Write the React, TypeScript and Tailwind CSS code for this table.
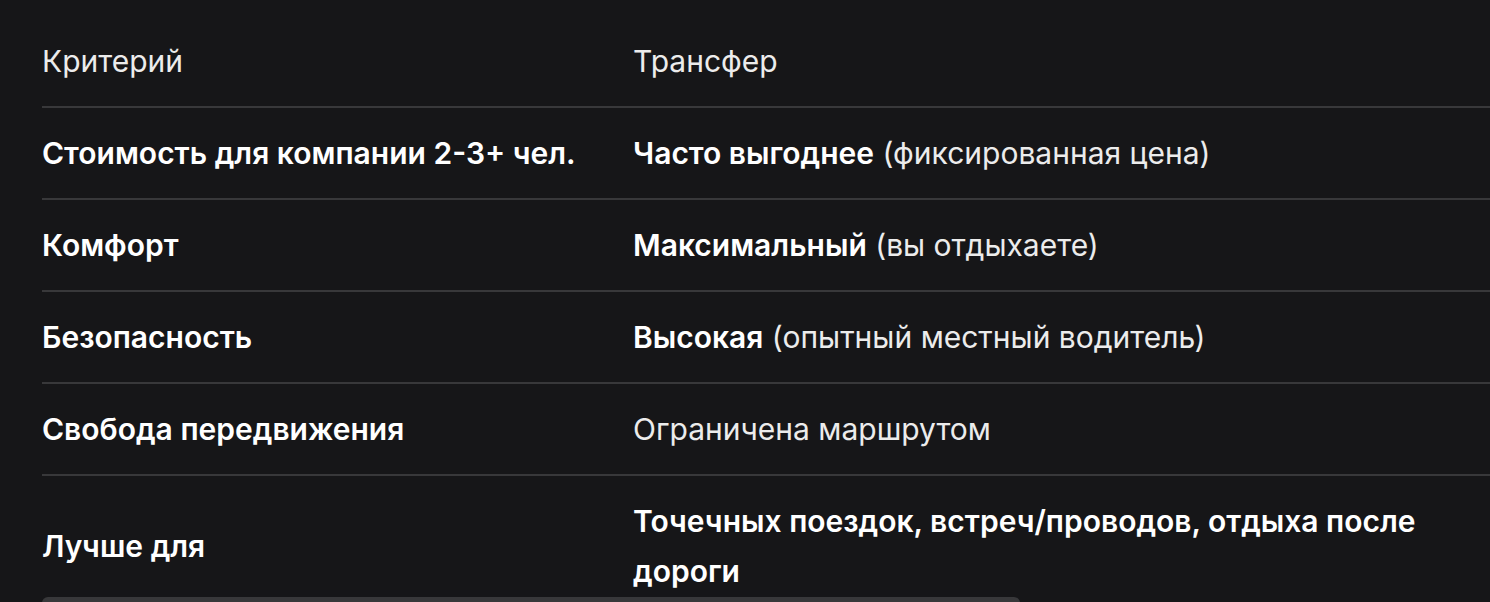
const rows: { label: string; strong?: string; rest?: string }[] = [
	{ label: "Стоимость для компании 2-3+ чел.", strong: "Часто выгоднее", rest: " (фиксированная цена)" },
	{ label: "Комфорт", strong: "Максимальный", rest: " (вы отдыхаете)" },
	{ label: "Безопасность", strong: "Высокая", rest: " (опытный местный водитель)" },
	{ label: "Свобода передвижения", rest: "Ограничена маршрутом" },
	{ label: "Лучше для", strong: "Точечных поездок, встреч/проводов, отдыха после дороги" },
];

export default function App() {
	return (
		<div
			className="relative h-[602px] w-full overflow-hidden bg-[#161618] text-[#ececec]"
			style={{ fontFamily: "Inter, 'Noto Sans', sans-serif" }}
		>
			<div className="ml-[42px] pt-[16px] text-[30px] leading-[50px]">
				{/* Header */}
				<div className="grid grid-cols-[591px_1fr] border-b-2 border-[#38383a] py-[20px]">
					<div>Критерий</div>
					<div>Трансфер</div>
				</div>

				{/* Body */}
				{rows.map((row) => (
					<div
						key={row.label}
						className="grid grid-cols-[591px_1fr] items-center border-b-2 border-[#38383a] py-[20px]"
					>
						<div className="font-semibold text-white">{row.label}</div>
						<div>
							{row.strong && <span className="font-semibold text-white">{row.strong}</span>}
							{row.rest}
						</div>
					</div>
				))}
			</div>

			{/* Horizontal scrollbar thumb */}
			<div className="absolute left-[42px] top-[597px] h-[12px] w-[978px] rounded-[8px] bg-[#38383a]" />
		</div>
	);
}
